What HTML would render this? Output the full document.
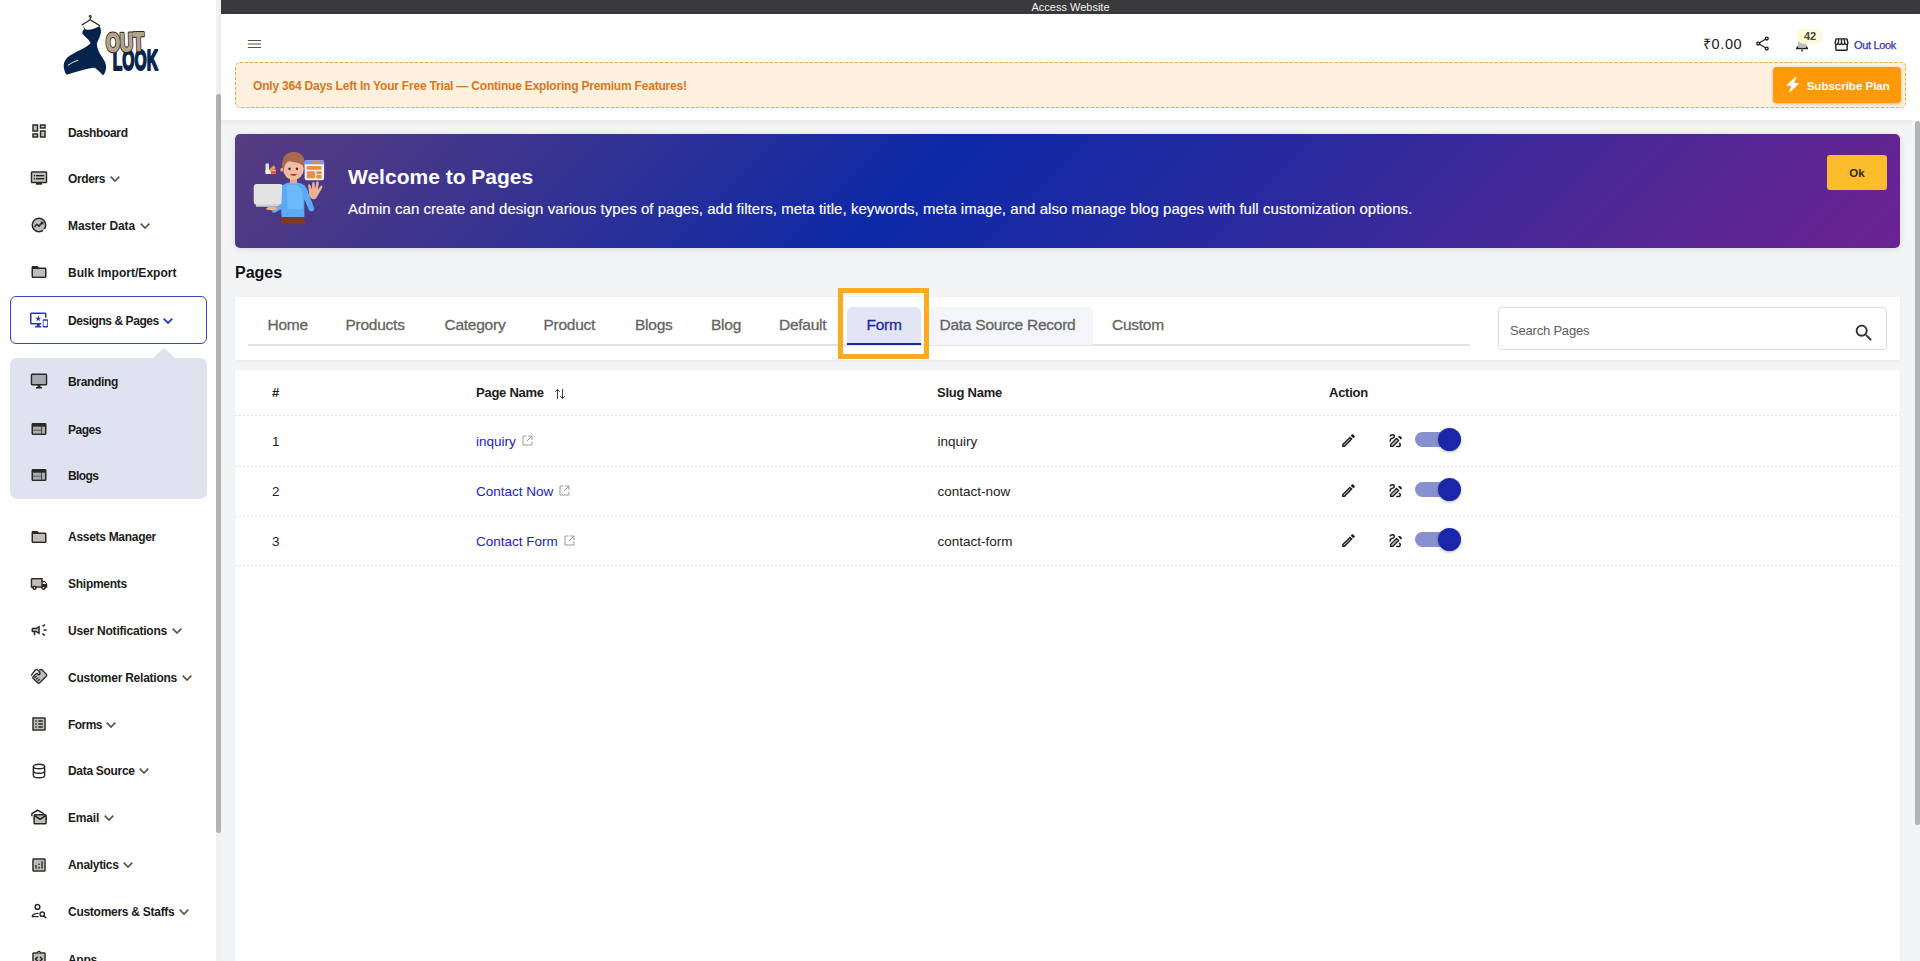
<!DOCTYPE html>
<html><head><meta charset="utf-8">
<style>
*{box-sizing:border-box;margin:0;padding:0}
html,body{width:1920px;height:961px;overflow:hidden;background:#f3f4f6;font-family:"Liberation Sans",sans-serif;color:#1f1f1f}
.abs{position:absolute}
#sidebar{position:absolute;left:0;top:0;width:221px;height:961px;background:#fff;overflow:hidden}
#sbtrack{position:absolute;left:216px;top:0;width:5px;height:961px;background:#f1f1f1}
#sbthumb{position:absolute;left:216px;top:94px;width:5px;height:739px;background:#b3b3b3;border-radius:3px}
.sic{position:absolute;left:30px;width:18px;height:18px}
.stx{position:absolute;left:68px;font-size:12px;line-height:16px;font-weight:700;color:#1c1c1c;white-space:nowrap;letter-spacing:-0.3px}
.chev{position:absolute;margin-left:4.5px;margin-top:5px;width:10px;height:6px}
#dpbox{position:absolute;left:10px;top:296px;width:197px;height:48px;border:1px solid #3447c0;border-radius:6px;background:#fff}
#submenu{position:absolute;left:10px;top:358px;width:197px;height:141px;background:#dfe2ef;border-radius:7px}
#subtri{position:absolute;left:153px;top:348px;width:0;height:0;border-left:11px solid transparent;border-right:11px solid transparent;border-bottom:10px solid #dfe2ef}
#topbar{position:absolute;left:221px;top:0;width:1699px;height:14px;background:#3a3a3c;color:#f2f2f2;font-size:11px;text-align:center;line-height:14px}
#header{position:absolute;left:221px;top:14px;width:1699px;height:106px;background:#fff;box-shadow:0 1px 5px rgba(0,0,0,0.07)}
#trial{position:absolute;left:235px;top:62px;width:1671px;height:46px;background:#fdf0df;border:1px dashed #f4a630;border-radius:5px}
#trial .t{position:absolute;left:17px;top:15px;font-size:12px;line-height:16px;font-weight:700;color:#d9771b;white-space:nowrap;letter-spacing:-0.2px}
#subbtn{position:absolute;left:1773px;top:67px;width:128px;height:36px;background:#ff9a06;border-radius:4px;box-shadow:0 1px 3px rgba(0,0,0,0.25);color:#fff}
#subbtn span{position:absolute;left:33.7px;top:11px;font-size:11.5px;line-height:16px;font-weight:700;white-space:nowrap}
#welcome{position:absolute;left:235px;top:134px;width:1665px;height:113.5px;border-radius:5px;background:linear-gradient(135deg,#573c7f 0%,#3a3490 18%,#0d29a7 41%,#2a2a9e 62%,#4c2896 80%,#6c2391 100%);box-shadow:0 1px 6px rgba(0,0,0,0.12)}
#wtitle{position:absolute;left:348px;top:164px;font-size:21px;line-height:26px;font-weight:700;color:#fff;white-space:nowrap}
#wdesc{position:absolute;left:348px;top:200px;font-size:15px;line-height:18px;color:#fff;white-space:nowrap;letter-spacing:0.045px;-webkit-text-stroke:0.15px #fff}
#okbtn{position:absolute;left:1827px;top:155px;width:60px;height:35px;background:#fbbd2b;border-radius:3px;font-size:11.5px;font-weight:700;color:#2a2a2a;text-align:center;line-height:37px}
#ptitle{position:absolute;left:235px;top:263px;font-size:16px;line-height:20px;font-weight:700;color:#111}
#tabscard{position:absolute;left:235px;top:297px;width:1665px;height:63px;background:#fff;box-shadow:0 1px 3px rgba(0,0,0,0.06)}
.tab{position:absolute;top:316px;font-size:15.5px;line-height:18px;color:#666462;white-space:nowrap;letter-spacing:-0.25px;-webkit-text-stroke:0.3px currentColor}
#tabline{position:absolute;left:248px;top:344px;width:1222px;height:2px;background:#e3e3e3}
#activebg{position:absolute;left:847px;top:307px;width:74px;height:38px;background:#e3e4f4;border-radius:5px 5px 0 0}
#activeline{position:absolute;left:847px;top:343px;width:74px;height:2px;background:#1a28a6}
#dsrbg{position:absolute;left:929px;top:307px;width:164px;height:38px;background:#f4f5fa;border-radius:5px 5px 0 0}
#hl{position:absolute;left:838px;top:288.3px;width:91px;height:70.7px;border:5px solid #fdab1e}
#search{position:absolute;left:1498px;top:307px;width:389px;height:43px;border:1px solid #dcdcdc;border-radius:4px;background:#fff}
#search span{position:absolute;left:11px;top:14.6px;font-size:13px;line-height:16px;color:#5d5d5d;white-space:nowrap;letter-spacing:-0.2px}
#tablecard{position:absolute;left:235px;top:370px;width:1665px;height:600px;background:#fff;box-shadow:0 1px 3px rgba(0,0,0,0.05)}
.th{position:absolute;font-size:13px;line-height:16px;font-weight:700;color:#1c1c1c;white-space:nowrap;letter-spacing:-0.25px}
.td{position:absolute;font-size:13.5px;line-height:16px;color:#222;white-space:nowrap}
.lnk{color:#2020d6}
.rowline{position:absolute;left:235px;width:1665px;height:1px;background:repeating-linear-gradient(90deg,#e2e2e2 0 2px,transparent 2px 4px)}
#rtrack{position:absolute;left:1912px;top:120px;width:8px;height:841px;background:#f3f4f6}
#rscroll{position:absolute;left:1915px;top:120.5px;width:5px;height:704px;background:#b3b3b3;border-radius:3px}
.tog{position:absolute;width:38px;height:15px;border-radius:8px;background:#8890d0}
.knob{position:absolute;width:23px;height:23px;border-radius:50%;background:#1a27a8;box-shadow:0 1px 3px rgba(0,0,0,0.3)}
</style></head>
<body>
<div id="sidebar">
<svg class="abs" style="left:50px;top:10px" width="120" height="75" viewBox="0 0 1538 961">
<path d="M505 85 C500 70 525 65 528 80 C530 92 515 98 515 110 L515 125 L410 192 M515 125 L635 198" fill="none" stroke="#1e1e1e" stroke-width="15" stroke-linecap="round"/>
<path fill="#06244b" d="M420 195 L440 245 C415 260 405 290 430 320 C470 360 510 390 520 425 C470 480 360 520 260 580 C170 640 150 720 210 830 C300 810 440 750 560 740 C610 770 650 800 680 840 C730 780 730 700 690 640 C640 560 600 500 600 430 C630 360 665 300 650 240 L630 200 L620 215 C570 240 500 265 455 245 Z"/>
<path d="M230 710 C270 680 310 660 360 645" fill="none" stroke="#fff" stroke-width="12"/>
<path d="M575 740 C595 755 610 775 615 795" fill="none" stroke="#fff" stroke-width="10"/>
<text x="805" y="765" font-family="Liberation Sans" font-weight="700" font-size="390" fill="#06244b" stroke="#06244b" stroke-width="26" stroke-linejoin="round" textLength="580" lengthAdjust="spacingAndGlyphs">LOOK</text>
<g transform="rotate(-2 960 400)"><text x="715" y="525" font-family="Liberation Sans" font-weight="700" font-size="330" fill="#2a2218" stroke="#2a2218" stroke-width="44" stroke-linejoin="round" textLength="490" lengthAdjust="spacingAndGlyphs">OUT</text><text x="715" y="525" font-family="Liberation Sans" font-weight="700" font-size="330" fill="#b6a58d" stroke="#b6a58d" stroke-width="18" stroke-linejoin="round" textLength="490" lengthAdjust="spacingAndGlyphs">OUT</text></g>
</svg>
<div id="dpbox"></div>
<div id="subtri"></div>
<div id="submenu"></div>
<svg class="sic" style="top:121.8px" viewBox="0 0 24 24"><path fill="#2b2822" opacity=".3" d="M5 5h4v6H5zm10 8h4v6h-4zM5 17h4v2H5zM15 5h4v2h-4z"/><path fill="#2b2822" d="M3 13h8V3H3v10zm2-8h4v6H5V5zm8 16h8V11h-8v10zm2-8h4v6h-4v-6zM13 3v6h8V3h-8zm6 4h-4V5h4v2zM3 21h8v-6H3v6zm2-4h4v2H5v-2z"/></svg>
<div class="stx" style="top:124.6px;letter-spacing:-0.34px">Dashboard</div>
<svg class="sic" style="top:168.9px" viewBox="0 0 24 24"><path fill="#2b2822" opacity=".3" d="M3 17h18V5H3v12zm5-9h11v2H8V8zm0 4h11v2H8v-2zM5 8h2v2H5V8zm0 4h2v2H5v-2z"/><path fill="#2b2822" d="M21 3H3c-1.1 0-2 .9-2 2v12c0 1.1.9 2 2 2h5v2h8v-2h5c1.1 0 1.99-.9 1.99-2L23 5c0-1.1-.9-2-2-2zm0 14H3V5h18v12zM8 8h11v2H8zm0 4h11v2H8zM5 8h2v2H5zm0 4h2v2H5z"/></svg>
<div class="stx" style="top:170.7px;letter-spacing:-0.39px">Orders<svg class="chev" viewBox="0 0 10 6"><polyline points="0.7,0.7 5,5 9.3,0.7" fill="none" stroke="#5f533f" stroke-width="1.7"/></svg></div>
<svg class="sic" style="top:215.7px" viewBox="0 0 24 24"><circle cx="12" cy="12" r="9" fill="#2b2822" opacity=".3"/><circle cx="12" cy="12" r="9" fill="none" stroke="#2b2822" stroke-width="2"/><polyline points="6,14.5 9,11 12,13.5 16.5,8.5" fill="none" stroke="#2b2822" stroke-width="2"/><path fill="#2b2822" d="M13.5 7.5h4.5v4.5z"/><path fill="#fff" d="M19 17l3 3-2 2-3-3z"/></svg>
<div class="stx" style="top:217.5px;letter-spacing:-0.09px">Master Data<svg class="chev" viewBox="0 0 10 6"><polyline points="0.7,0.7 5,5 9.3,0.7" fill="none" stroke="#5f533f" stroke-width="1.7"/></svg></div>
<svg class="sic" style="top:263.3px" viewBox="0 0 24 24"><path fill="#2b2822" opacity=".3" d="M4 8h16v10H4z"/><path fill="#2b2822" d="M20 6h-8l-2-2H4c-1.1 0-1.99.9-1.99 2L2 18c0 1.1.9 2 2 2h16c1.1 0 2-.9 2-2V8c0-1.1-.9-2-2-2zm0 12H4V8h16v10z"/></svg>
<div class="stx" style="top:265.1px;letter-spacing:0.03px">Bulk Import/Export</div>
<svg class="sic" style="top:311.1px" viewBox="0 0 24 24"><path fill="#2638b8" d="M23 11.01L18 11c-.55 0-1 .45-1 1v9c0 .55.45 1 1 1h5c.55 0 1-.45 1-1v-9c0-.55-.45-.99-1-.99zM23 20h-5v-7h5v7zM20 2H2C.89 2 0 2.89 0 4v12c0 1.1.89 2 2 2h7v2H7v2h8v-2h-2v-2h2v-2H2V4h18v5h2V4c0-1.11-.9-2-2-2zm-8.03 7L11 6l-.97 3H7l2.47 1.76-.94 2.91 2.47-1.8 2.47 1.8-.94-2.91L15 9h-3.03z"/></svg>
<div class="stx" style="top:312.9px;letter-spacing:-0.44px">Designs &amp; Pages<svg class="chev" viewBox="0 0 10 6"><polyline points="0.7,0.7 5,5 9.3,0.7" fill="none" stroke="#2638b8" stroke-width="1.8"/></svg></div>
<svg class="sic" style="top:372.4px" viewBox="0 0 24 24"><path fill="#2b2822" opacity=".3" d="M3 4h18v12H3z"/><path fill="#2b2822" d="M21 2H3c-1.1 0-2 .9-2 2v12c0 1.1.9 2 2 2h7v2H8v2h8v-2h-2v-2h7c1.1 0 2-.9 2-2V4c0-1.1-.9-2-2-2zm0 14H3V4h18v12z"/></svg>
<div class="stx" style="top:374.2px;letter-spacing:-0.33px">Branding</div>
<svg class="sic" style="top:419.7px" viewBox="0 0 24 24"><path fill="#2b2822" opacity=".3" d="M4 9h11v4H4zm0 5h11v4H4zm12-5h4v9h-4z"/><path fill="#2b2822" d="M20 4H4c-1.1 0-1.99.9-1.99 2L2 18c0 1.1.9 2 2 2h16c1.1 0 2-.9 2-2V6c0-1.1-.9-2-2-2zm-5 14H4v-4h11v4zm0-5H4V9h11v4zm5 5h-4V9h4v9z"/></svg>
<div class="stx" style="top:421.5px;letter-spacing:-0.47px">Pages</div>
<svg class="sic" style="top:466.3px" viewBox="0 0 24 24"><path fill="#2b2822" opacity=".3" d="M4 9h11v4H4zm0 5h11v4H4zm12-5h4v9h-4z"/><path fill="#2b2822" d="M20 4H4c-1.1 0-1.99.9-1.99 2L2 18c0 1.1.9 2 2 2h16c1.1 0 2-.9 2-2V6c0-1.1-.9-2-2-2zm-5 14H4v-4h11v4zm0-5H4V9h11v4zm5 5h-4V9h4v9z"/></svg>
<div class="stx" style="top:468.1px;letter-spacing:-0.61px">Blogs</div>
<svg class="sic" style="top:527.6px" viewBox="0 0 24 24"><path fill="#2b2822" opacity=".3" d="M4 8h16v10H4z"/><path fill="#2b2822" d="M20 6h-8l-2-2H4c-1.1 0-1.99.9-1.99 2L2 18c0 1.1.9 2 2 2h16c1.1 0 2-.9 2-2V8c0-1.1-.9-2-2-2zm0 12H4V8h16v10z"/></svg>
<div class="stx" style="top:529.4px;letter-spacing:-0.29px">Assets Manager</div>
<svg class="sic" style="top:574.5px" viewBox="0 0 24 24"><path fill="#2b2822" opacity=".3" d="M3 6h12v9H8.22c-.55-.61-1.34-1-2.22-1s-1.67.39-2.22 1H3V6z"/><path fill="#2b2822" d="M20 8h-3V4H3c-1.1 0-2 .9-2 2v11h2c0 1.66 1.34 3 3 3s3-1.34 3-3h6c0 1.66 1.34 3 3 3s3-1.34 3-3h2v-5l-3-4zM6 18c-.55 0-1-.45-1-1s.45-1 1-1 1 .45 1 1-.45 1-1 1zm9-3H8.22c-.55-.61-1.33-1-2.22-1s-1.67.39-2.22 1H3V6h12v9zm3 3c-.55 0-1-.45-1-1s.45-1 1-1 1 .45 1 1-.45 1-1 1zm-1-5V9.5h2.5l1.96 2.5H17z"/></svg>
<div class="stx" style="top:576.3px;letter-spacing:-0.26px">Shipments</div>
<svg class="sic" style="top:621.3px" viewBox="0 0 24 24"><path fill="#2b2822" d="M18 11v2h4v-2h-4zm-2 6.61c.96.71 2.21 1.65 3.2 2.39.4-.53.8-1.07 1.2-1.6-.99-.74-2.24-1.68-3.2-2.4-.4.54-.8 1.08-1.2 1.610zM20.4 5.6c-.4-.53-.8-1.07-1.2-1.6-.99.74-2.24 1.68-3.2 2.4.4.53.8 1.07 1.2 1.6.96-.72 2.21-1.65 3.2-2.4zM4 9c-1.1 0-2 .9-2 2v2c0 1.1.9 2 2 2h1v4h2v-4h1l5 3V6L8 9H4zm7 5.6L8.55 13H4v-2h4.55L11 9.4v5.2z"/><path fill="#2b2822" opacity=".3" d="M11 9.4L8.55 11H4v2h4.55L11 14.6z"/></svg>
<div class="stx" style="top:623.1px;letter-spacing:-0.2px">User Notifications<svg class="chev" viewBox="0 0 10 6"><polyline points="0.7,0.7 5,5 9.3,0.7" fill="none" stroke="#5f533f" stroke-width="1.7"/></svg></div>
<svg class="sic" style="top:668.1px" viewBox="0 0 24 24"><svg x="0" y="0" width="24" height="24" viewBox="87 92 787 787"><path fill="#2b2822" opacity=".3" d="M480 200 L620 160 L810 400 L480 760 L200 500 L380 330 Z"/><path fill="none" stroke="#2b2822" stroke-width="58" stroke-linejoin="round" d="M500 190 C540 150 590 150 630 190 L790 350 C830 390 830 420 790 460 L510 740 C480 770 450 770 420 740 L230 550 C200 520 200 490 230 460 L370 330"/><path fill="none" stroke="#2b2822" stroke-width="58" stroke-linecap="round" stroke-linejoin="round" d="M150 400 L320 180 C350 150 390 150 420 180 L480 230 C530 280 540 350 500 380 C470 400 430 380 400 330"/><path stroke="#2b2822" stroke-width="50" stroke-linecap="round" d="M360 450 L300 510 M430 520 L370 580 M500 590 L440 650"/></svg></svg>
<div class="stx" style="top:669.9px;letter-spacing:-0.24px">Customer Relations<svg class="chev" viewBox="0 0 10 6"><polyline points="0.7,0.7 5,5 9.3,0.7" fill="none" stroke="#5f533f" stroke-width="1.7"/></svg></div>
<svg class="sic" style="top:714.9px" viewBox="0 0 24 24"><path fill="#2b2822" opacity=".3" d="M5 5h14v14H5z"/><path fill="#2b2822" d="M11 7h6v2h-6zm0 4h6v2h-6zm0 4h6v2h-6zM7 7h2v2H7zm0 4h2v2H7zm0 4h2v2H7zM20.1 3H3.9c-.5 0-.9.4-.9.9v16.2c0 .4.4.9.9.9h16.2c.4 0 .9-.5.9-.9V3.9c0-.5-.5-.9-.9-.9zM19 19H5V5h14v14z"/></svg>
<div class="stx" style="top:716.7px;letter-spacing:-0.54px">Forms<svg class="chev" viewBox="0 0 10 6"><polyline points="0.7,0.7 5,5 9.3,0.7" fill="none" stroke="#5f533f" stroke-width="1.7"/></svg></div>
<svg class="sic" style="top:761.6px" viewBox="0 0 24 24"><g fill="none" stroke="#2b2822" stroke-width="1.9"><ellipse cx="12" cy="6" rx="7.5" ry="3"/><path d="M4.5 6v12c0 1.66 3.36 3 7.5 3s7.5-1.34 7.5-3V6"/><path d="M4.5 12c0 1.66 3.36 3 7.5 3s7.5-1.34 7.5-3"/></g></svg>
<div class="stx" style="top:763.4px;letter-spacing:-0.3px">Data Source<svg class="chev" viewBox="0 0 10 6"><polyline points="0.7,0.7 5,5 9.3,0.7" fill="none" stroke="#5f533f" stroke-width="1.7"/></svg></div>
<svg class="sic" style="top:808.3px" viewBox="0 0 24 24"><rect x="5.5" y="9" width="16" height="12" rx="1.5" fill="#2b2822" opacity=".3"/><g fill="none" stroke="#2b2822" stroke-width="2" stroke-linejoin="round"><path d="M2.5 11V7.5L10 3l8.5 4.5"/><rect x="5.5" y="9" width="16" height="12" rx="1.5"/><path d="M5.8 10l7.7 5 7.7-5"/></g></svg>
<div class="stx" style="top:810.1px;letter-spacing:-0.2px">Email<svg class="chev" viewBox="0 0 10 6"><polyline points="0.7,0.7 5,5 9.3,0.7" fill="none" stroke="#5f533f" stroke-width="1.7"/></svg></div>
<svg class="sic" style="top:855.5px" viewBox="0 0 24 24"><path fill="#2b2822" opacity=".3" d="M5 19h14V5H5v14zm10-12h2v10h-2V7zm-4 3h2v2h-2v-2zm0 4h2v3h-2v-3zm-4-2h2v5H7v-5z"/><path fill="#2b2822" d="M19 3H5c-1.1 0-2 .9-2 2v14c0 1.1.9 2 2 2h14c1.1 0 2-.9 2-2V5c0-1.1-.9-2-2-2zm0 16H5V5h14v14zM7 12h2v5H7zm8-5h2v10h-2zm-4 7h2v3h-2zm0-4h2v2h-2z"/></svg>
<div class="stx" style="top:857.3px;letter-spacing:-0.31px">Analytics<svg class="chev" viewBox="0 0 10 6"><polyline points="0.7,0.7 5,5 9.3,0.7" fill="none" stroke="#5f533f" stroke-width="1.7"/></svg></div>
<svg class="sic" style="top:902.0px" viewBox="0 0 24 24"><g fill="none" stroke="#2b2822" stroke-width="1.9"><circle cx="10" cy="6.5" r="3.2"/><path d="M11.5 15.2c-4.5-.3-8.5 1.5-8.5 4.3h8.5"/><circle cx="16.3" cy="16.3" r="2.9"/><path d="M18.4 18.4l3.3 3.3" stroke-width="2.1"/></g></svg>
<div class="stx" style="top:903.8px;letter-spacing:-0.27px">Customers &amp; Staffs<svg class="chev" viewBox="0 0 10 6"><polyline points="0.7,0.7 5,5 9.3,0.7" fill="none" stroke="#5f533f" stroke-width="1.7"/></svg></div>
<svg class="sic" style="top:949.8px" viewBox="0 0 24 24"><path fill="#2b2822" opacity=".3" d="M5 5h14v14H5z"/><path fill="#2b2822" d="M19 3h-4.18C14.4 1.84 13.3 1 12 1s-2.4.84-2.82 2H5c-1.1 0-2 .9-2 2v14c0 1.1.9 2 2 2h14c1.1 0 2-.9 2-2V5c0-1.1-.9-2-2-2zm-7-.25c.41 0 .75.34.75.75s-.34.75-.75.75-.75-.34-.75-.75.34-.75.75-.75zM19 19H5V5h14v14zM11 14.17l-1.41 1.42L6 12l3.59-3.59L11 9.83 8.83 12 11 14.17zm3 1.42l-1.41-1.42L14.83 12 12.6 9.83 14 8.41 17.59 12 14 15.59z"/></svg>
<div class="stx" style="top:951.6px;letter-spacing:-0.3px">Apps</div>
</div>
<div id="sbtrack"></div>
<div id="sbthumb"></div>

<div id="topbar">Access Website</div>
<div id="header"></div>
<svg class="abs" style="left:246px;top:38px" width="16" height="12" viewBox="0 0 16 12"><path d="M2.3 2.5h12.4M2.3 6h12.4M2.3 9.5h12.4" stroke="#5c5140" stroke-width="1.15" stroke-linecap="round"/></svg>
<div class="abs" style="left:1703px;top:35px;font-size:14.5px;line-height:18px;color:#222;white-space:nowrap;letter-spacing:0.6px">₹0.00</div>
<svg class="abs" style="left:1754px;top:35px" width="17" height="17" viewBox="0 0 24 24"><path fill="#222" d="M18 16.08c-.76 0-1.44.3-1.96.77L8.91 12.7c.05-.23.09-.46.09-.7s-.04-.47-.09-.7l7.05-4.11c.54.5 1.25.81 2.04.81 1.66 0 3-1.34 3-3s-1.34-3-3-3-3 1.34-3 3c0 .24.04.47.09.7L8.04 9.81C7.5 9.31 6.79 9 6 9c-1.66 0-3 1.34-3 3s1.34 3 3 3c.79 0 1.5-.31 2.04-.81l7.12 4.16c-.05.21-.08.43-.08.65 0 1.61 1.31 2.92 2.92 2.92s2.92-1.31 2.92-2.92-1.31-2.92-2.92-2.92zM18 4c.55 0 1 .45 1 1s-.45 1-1 1-1-.45-1-1 .45-1 1-1zM6 13c-.55 0-1-.45-1-1s.45-1 1-1 1 .45 1 1-.45 1-1 1zm12 7.02c-.55 0-1-.45-1-1s.45-1 1-1 1 .45 1 1-.45 1-1 1z"/></svg>
<svg class="abs" style="left:1794px;top:36px" width="16" height="16" viewBox="0 0 16 16"><path d="M3.5 12 L4 6 C4 4 5.5 3 8 3 C10.5 3 12 4 12 6 L12.5 12 Z" fill="#bdbdbd"/><path d="M2.5 12.3 L4 10.5 M13.5 12.3 L12 10.5" stroke="#222" stroke-width="1.2"/><path d="M2 12.6h12" stroke="#222" stroke-width="1.3"/><circle cx="8" cy="14.5" r="0.9" fill="#222"/></svg>
<div class="abs" style="left:1796px;top:28.5px;width:26px;height:15px;border-radius:9px 8px 9px 11px;background:#fcfad8"></div>
<div class="abs" style="left:1804px;top:30px;font-size:11px;line-height:12px;font-weight:700;color:#4a4436">42</div>
<svg class="abs" style="left:1833px;top:35.5px" width="17" height="17" viewBox="0 0 24 24"><path fill="#222" d="M21.9 8.89l-1.05-4.37c-.22-.9-1-1.52-1.91-1.52H5.05c-.9 0-1.69.63-1.9 1.52L2.1 8.89c-.24 1.02-.02 2.06.62 2.88.08.11.19.19.28.29V19c0 1.1.9 2 2 2h14c1.1 0 2-.9 2-2v-6.94c.09-.09.2-.18.28-.28.64-.82.87-1.87.62-2.89zm-2.99-3.9l1.05 4.37c.1.42.01.84-.25 1.17-.14.18-.44.47-.94.47-.61 0-1.14-.49-1.21-1.14L16.98 5l1.93-.01zM13 5h1.96l.54 4.52c.05.39-.07.78-.33 1.07-.22.26-.54.41-.95.41-.67 0-1.22-.59-1.22-1.31V5zM8.49 9.52L9.04 5H11v4.69c0 .72-.55 1.31-1.29 1.31-.34 0-.65-.15-.89-.41-.25-.29-.37-.68-.33-1.07zm-4.45-.16L5.05 5h1.97l-.58 4.86c-.08.65-.6 1.14-1.21 1.14-.49 0-.8-.29-.93-.47-.27-.32-.36-.75-.26-1.17zM5 19v-6.03c.08.01.15.03.23.03.87 0 1.66-.36 2.24-.95.6.6 1.4.95 2.31.95.87 0 1.65-.36 2.23-.93.59.57 1.39.93 2.29.93.84 0 1.64-.35 2.24-.95.58.59 1.37.95 2.24.95.08 0 .15-.02.23-.03V19H5z"/></svg>
<div class="abs" style="left:1854px;top:37.5px;font-size:11px;line-height:14px;color:#3434a8;white-space:nowrap;letter-spacing:-0.35px;-webkit-text-stroke:0.25px #3434a8">Out Look</div>

<div id="trial"><div class="t">Only 364 Days Left In Your Free Trial — Continue Exploring Premium Features!</div></div>
<div id="subbtn"><svg class="abs" style="left:12px;top:9px" width="15" height="17" viewBox="0 0 15 17"><path fill="#fff" stroke="#fff" stroke-width="1.3" stroke-linejoin="round" d="M10.8 1.5L2.3 9.3H7.4L4.8 15.4L13.2 7.6H8.1z"/></svg><span>Subscribe Plan</span></div>

<div id="welcome"></div>
<svg class="abs" style="left:245px;top:140px" width="90" height="95" viewBox="0 0 910 961">
<rect x="88" y="445" width="295" height="210" rx="30" fill="#e3e3e3"/>
<rect x="110" y="648" width="338" height="28" rx="8" fill="#d4d4d4"/>
<path fill="#5aaaf6" d="M375 470 C400 430 460 425 490 428 C540 428 600 440 625 490 L700 690 C705 720 670 730 650 715 L600 600 L600 780 L370 780 L365 700 L300 735 C275 740 265 720 280 705 L370 640 Z"/>
<path fill="#7cc3ff" opacity=".6" d="M420 460 C470 440 560 450 580 520 L585 700 L430 700 Z"/>
<path fill="#eeb196" d="M650 560 L640 470 C635 440 660 440 665 465 L675 500 L680 440 C682 420 705 420 705 442 L708 495 L720 430 C725 410 748 415 745 440 L738 505 L760 470 C772 452 790 465 780 485 L720 590 C700 610 665 600 650 560 Z"/>
<path fill="#eeb196" d="M215 690 C240 670 300 672 330 690 L320 705 C290 712 240 712 215 700 Z"/>
<path fill="#7a3a28" d="M370 778 L600 778 L615 852 L362 852 Z"/>
<rect x="455" y="380" width="70" height="60" fill="#e8a88e"/>
<ellipse cx="490" cy="290" rx="105" ry="112" fill="#f3bba2"/>
<path fill="#a8694f" d="M378 300 C360 170 420 122 492 122 C570 122 620 170 605 300 L585 260 C560 230 500 225 440 215 C410 235 395 265 390 320 Z"/>
<ellipse cx="372" cy="300" rx="14" ry="20" fill="#e9a78c"/>
<ellipse cx="450" cy="292" rx="12" ry="14" fill="#3a2a25"/><ellipse cx="525" cy="292" rx="12" ry="14" fill="#3a2a25"/>
<path d="M455 345 C475 370 510 370 528 345 Z" fill="#c8352f"/>
<rect x="603" y="205" width="197" height="202" rx="22" fill="#f5f1f5"/>
<path d="M603 245 L603 227 C603 214 613 205 625 205 L778 205 C790 205 800 214 800 227 L800 245 Z" fill="#7d95ef"/>
<rect x="680" y="222" width="92" height="14" rx="5" fill="#e98c3e"/>
<rect x="625" y="262" width="148" height="40" rx="6" fill="#e69043"/>
<rect x="625" y="315" width="82" height="72" rx="6" fill="#e69043"/>
<rect x="720" y="315" width="55" height="32" rx="5" fill="#e69043"/>
<rect x="720" y="355" width="55" height="35" rx="5" fill="#e69043"/>
<rect x="208" y="238" width="34" height="105" rx="6" fill="#dfe6f7"/>
<rect x="208" y="300" width="105" height="43" rx="5" fill="#f2f2f2"/>
<rect x="262" y="312" width="52" height="30" rx="4" fill="#e74a4a"/>
<path d="M240 300 L290 255 L312 282 L262 318 Z" fill="#e99a48"/>
</svg>
<div id="wtitle">Welcome to Pages</div>
<div id="wdesc">Admin can create and design various types of pages, add filters, meta title, keywords, meta image, and also manage blog pages with full customization options.</div>
<div id="okbtn">Ok</div>

<div id="ptitle">Pages</div>
<div id="tabscard"></div>
<div id="tabline"></div>
<div id="dsrbg"></div>
<div id="activebg"></div>
<div id="activeline"></div>
<div class="tab" style="left:267.5px">Home</div>
<div class="tab" style="left:345.5px">Products</div>
<div class="tab" style="left:444.5px">Category</div>
<div class="tab" style="left:543.5px">Product</div>
<div class="tab" style="left:635px">Blogs</div>
<div class="tab" style="left:711px">Blog</div>
<div class="tab" style="left:779px">Default</div>
<div class="tab" style="left:866.5px;color:#1c2aa6">Form</div>
<div class="tab" style="left:939.5px">Data Source Record</div>
<div class="tab" style="left:1112px">Custom</div>
<div id="hl"></div>
<div id="search"><span>Search Pages</span>
<svg class="abs" style="left:353.5px;top:13.5px" width="22" height="22" viewBox="0 0 24 24"><path fill="#333" d="M15.5 14h-.79l-.28-.27C15.41 12.59 16 11.11 16 9.5 16 5.91 13.09 3 9.5 3S3 5.91 3 9.5 5.91 16 9.5 16c1.61 0 3.09-.59 4.23-1.57l.27.28v.79l5 4.99L20.49 19l-4.99-5zm-6 0C7.01 14 5 11.99 5 9.5S7.01 5 9.5 5 14 7.01 14 9.5 11.99 14 9.5 14z"/></svg>
</div>

<div id="tablecard"></div>
<div class="th" style="left:272px;top:385px">#</div>
<div class="th" style="left:476px;top:385px">Page Name</div>
<svg class="abs" style="left:554px;top:388px" width="12" height="12" viewBox="0 0 12 12"><path d="M3.5 11V1.5M1.2 3.8l2.3-2.3L5.8 3.8M8.5 1v9.5M6.2 8.2l2.3 2.3 2.3-2.3" fill="none" stroke="#3a3a3a" stroke-width="1"/></svg>
<div class="th" style="left:937px;top:385px">Slug Name</div>
<div class="th" style="left:1329px;top:385px">Action</div>
<div class="rowline" style="top:415px"></div>
<div class="td" style="left:272px;top:433.9px">1</div>
<div class="td lnk" style="left:476px;top:433.9px">inquiry<svg style="position:absolute;margin-left:6px;margin-top:1px" width="11" height="11" viewBox="0 0 11 11"><path d="M4.5 1H1v9h9V6.5" fill="none" stroke="#9a9a9a" stroke-width="1"/><path d="M6 1h4v4M10 1L5 6" fill="none" stroke="#9a9a9a" stroke-width="1"/></svg></div>
<div class="td" style="left:937.5px;top:433.9px">inquiry</div>
<svg class="abs" style="left:1340px;top:431.9px" width="17" height="17" viewBox="0 0 24 24"><path fill="#222" opacity=".35" d="M5 18.08V19h.92l9.06-9.06-.92-.92z"/><path fill="#1e1b16" d="M3 17.25V21h3.75L17.81 9.94l-3.75-3.75L3 17.25zM5.92 19H5v-.92l9.06-9.06.92.92L5.92 19zM20.71 5.63l-2.34-2.34c-.2-.2-.45-.29-.71-.29s-.51.1-.7.29l-1.83 1.83 3.75 3.75 1.83-1.83c.39-.39.39-1.02 0-1.41z"/></svg>
<svg class="abs" style="left:1384px;top:430.0px" width="24" height="20" viewBox="0 0 1153 961"><g fill="none" stroke="#1e1b16" stroke-linecap="round" stroke-linejoin="round"><path stroke-width="72" d="M300 285 C340 220 450 205 490 270 C520 330 470 390 400 400 C330 410 285 460 300 530"/><path stroke-width="62" fill="#b8b8b8" d="M320 790 L315 690 L600 405 L705 505 L420 790 Z"/><path stroke-width="72" d="M745 645 C800 690 795 770 720 790 C680 800 645 795 615 790"/></g><path fill="#1e1b16" d="M670 310 C720 260 790 285 840 345 C880 395 850 445 790 450 Z"/></svg>
<div class="tog" style="left:1415px;top:432.4px"></div>
<div class="knob" style="left:1437.5px;top:428.4px"></div>
<div class="rowline" style="top:466px"></div>
<div class="td" style="left:272px;top:483.5px">2</div>
<div class="td lnk" style="left:476px;top:483.5px">Contact Now<svg style="position:absolute;margin-left:6px;margin-top:1px" width="11" height="11" viewBox="0 0 11 11"><path d="M4.5 1H1v9h9V6.5" fill="none" stroke="#9a9a9a" stroke-width="1"/><path d="M6 1h4v4M10 1L5 6" fill="none" stroke="#9a9a9a" stroke-width="1"/></svg></div>
<div class="td" style="left:937.5px;top:483.5px">contact-now</div>
<svg class="abs" style="left:1340px;top:481.5px" width="17" height="17" viewBox="0 0 24 24"><path fill="#222" opacity=".35" d="M5 18.08V19h.92l9.06-9.06-.92-.92z"/><path fill="#1e1b16" d="M3 17.25V21h3.75L17.81 9.94l-3.75-3.75L3 17.25zM5.92 19H5v-.92l9.06-9.06.92.92L5.92 19zM20.71 5.63l-2.34-2.34c-.2-.2-.45-.29-.71-.29s-.51.1-.7.29l-1.83 1.83 3.75 3.75 1.83-1.83c.39-.39.39-1.02 0-1.41z"/></svg>
<svg class="abs" style="left:1384px;top:479.6px" width="24" height="20" viewBox="0 0 1153 961"><g fill="none" stroke="#1e1b16" stroke-linecap="round" stroke-linejoin="round"><path stroke-width="72" d="M300 285 C340 220 450 205 490 270 C520 330 470 390 400 400 C330 410 285 460 300 530"/><path stroke-width="62" fill="#b8b8b8" d="M320 790 L315 690 L600 405 L705 505 L420 790 Z"/><path stroke-width="72" d="M745 645 C800 690 795 770 720 790 C680 800 645 795 615 790"/></g><path fill="#1e1b16" d="M670 310 C720 260 790 285 840 345 C880 395 850 445 790 450 Z"/></svg>
<div class="tog" style="left:1415px;top:482.0px"></div>
<div class="knob" style="left:1437.5px;top:478.0px"></div>
<div class="rowline" style="top:516px"></div>
<div class="td" style="left:272px;top:533.5px">3</div>
<div class="td lnk" style="left:476px;top:533.5px">Contact Form<svg style="position:absolute;margin-left:6px;margin-top:1px" width="11" height="11" viewBox="0 0 11 11"><path d="M4.5 1H1v9h9V6.5" fill="none" stroke="#9a9a9a" stroke-width="1"/><path d="M6 1h4v4M10 1L5 6" fill="none" stroke="#9a9a9a" stroke-width="1"/></svg></div>
<div class="td" style="left:937.5px;top:533.5px">contact-form</div>
<svg class="abs" style="left:1340px;top:531.5px" width="17" height="17" viewBox="0 0 24 24"><path fill="#222" opacity=".35" d="M5 18.08V19h.92l9.06-9.06-.92-.92z"/><path fill="#1e1b16" d="M3 17.25V21h3.75L17.81 9.94l-3.75-3.75L3 17.25zM5.92 19H5v-.92l9.06-9.06.92.92L5.92 19zM20.71 5.63l-2.34-2.34c-.2-.2-.45-.29-.71-.29s-.51.1-.7.29l-1.83 1.83 3.75 3.75 1.83-1.83c.39-.39.39-1.02 0-1.41z"/></svg>
<svg class="abs" style="left:1384px;top:529.6px" width="24" height="20" viewBox="0 0 1153 961"><g fill="none" stroke="#1e1b16" stroke-linecap="round" stroke-linejoin="round"><path stroke-width="72" d="M300 285 C340 220 450 205 490 270 C520 330 470 390 400 400 C330 410 285 460 300 530"/><path stroke-width="62" fill="#b8b8b8" d="M320 790 L315 690 L600 405 L705 505 L420 790 Z"/><path stroke-width="72" d="M745 645 C800 690 795 770 720 790 C680 800 645 795 615 790"/></g><path fill="#1e1b16" d="M670 310 C720 260 790 285 840 345 C880 395 850 445 790 450 Z"/></svg>
<div class="tog" style="left:1415px;top:532.0px"></div>
<div class="knob" style="left:1437.5px;top:528.0px"></div>
<div class="rowline" style="top:565px"></div>
<div id="rtrack"></div>
<div id="rscroll"></div>
</body></html>
